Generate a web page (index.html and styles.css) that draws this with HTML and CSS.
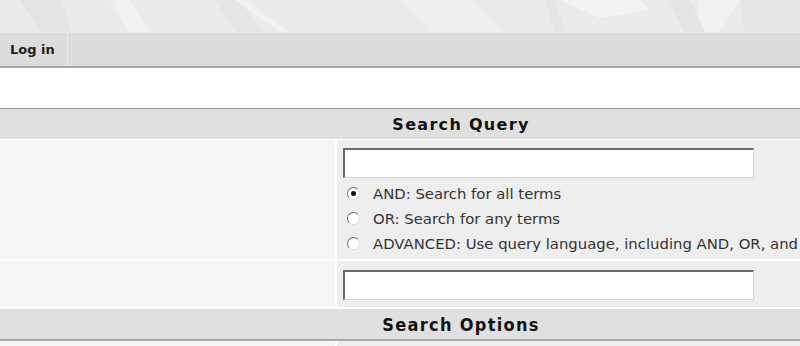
FILE: index.html
```html
<!DOCTYPE html>
<html>
<head>
<meta charset="utf-8">
<link rel="stylesheet" href="styles.css">
</head>
<body>
<header class="banner">
  <svg class="banner-art" width="800" height="32" viewBox="0 0 800 32" aria-hidden="true">
    <polygon points="20,0 60,0 72,32 40,32" fill="#e4e4e4"/>
    <polygon points="110,0 130,0 150,32 128,32" fill="#f1f1f1"/>
    <polygon points="215,0 240,0 262,32 236,32" fill="#e6e6e6"/>
    <polygon points="235,0 245,0 290,32 280,32" fill="#f2f2f2"/>
    <polygon points="560,0 640,0 650,10 600,18" fill="#f3f3f3"/>
    <polygon points="545,0 555,0 565,32 555,32" fill="#e5e5e5"/>
    <polygon points="700,0 740,0 720,32 690,32" fill="#f1f1f1"/>
    <polygon points="740,0 800,0 800,32 745,32" fill="#e6e6e6"/>
    <polygon points="400,0 470,0 505,32 430,32" fill="#eeeeee"/>
    <polygon points="670,0 690,0 705,32 684,32" fill="#e4e4e4"/>
  </svg>
</header>
<nav class="nav">
  <a class="nav-item" href="#">Log in</a>
</nav>
<div class="spacer"></div>
<div class="search">
  <div class="section-head">Search Query</div>
  <div class="cell-label"></div>
  <div class="cell-field">
    <input class="text-input" type="text">
    <div class="options">
      <label class="option"><input class="radio" type="radio" name="mode" checked><span>AND: Search for all terms</span></label>
      <label class="option"><input class="radio" type="radio" name="mode"><span>OR: Search for any terms</span></label>
      <label class="option"><input class="radio" type="radio" name="mode"><span>ADVANCED: Use query language, including AND, OR, and NOT</span></label>
    </div>
  </div>
  <div class="cell-label"></div>
  <div class="cell-field cell-short">
    <input class="text-input" type="text">
  </div>
  <div class="section-head section-head-alt">Search Options</div>
  <div class="cell-label cell-tail"></div>
  <div class="cell-field cell-tail"></div>
</div>
</body>
</html>
```
FILE: styles.css
```css
html, body {
  margin: 0;
  padding: 0;
  background: #ffffff;
  font-family: "DejaVu Sans", Verdana, sans-serif;
  overflow: hidden;
}
.banner {
  height: 32px;
  background: #ebebeb;
  overflow: hidden;
}
.banner-art {
  display: block;
}
.nav {
  display: flex;
  height: 33px;
  background: #dcdcdc;
  border-top: 1px solid #e6e6e6;
  border-bottom: 2px solid #a8a8a8;
  box-sizing: content-box;
}
.nav-item {
  display: flex;
  align-items: center;
  padding: 0 12px 0 10px;
  border-right: 1px solid #ececec;
  color: #1e1e1e;
  font-weight: bold;
  font-size: 13px;
  text-decoration: none;
}
.spacer {
  height: 40px;
}
.search {
  width: 922px;
  display: grid;
  grid-template-columns: 335px 1fr;
  column-gap: 2px;
  border-top: 1px solid #9a9a9a;
  background: #ffffff;
}
.section-head {
  grid-column: 1 / -1;
  height: 30px;
  background: #e0e0e0;
  border-bottom: 1px solid #ffffff;
  display: flex;
  align-items: center;
  justify-content: center;
  color: #111;
  font-weight: bold;
  font-size: 16px;
  letter-spacing: 1.3px;
}
.section-head-alt {
  margin-top: 1px;
  border-bottom: 2px solid #a8a8a8;
  font-family: "DejaVu Sans Condensed", "DejaVu Sans", sans-serif;
  font-size: 18px;
  letter-spacing: 1.3px;
  height: 30px;
}
.cell-label {
  background: #f5f5f5;
  margin-bottom: 2px;
}
.cell-field {
  background: #eeeeee;
  padding: 8px 0 3px 6px;
  margin-bottom: 2px;
  display: flex;
  flex-direction: column;
  align-items: flex-start;
}
.options {
  padding-top: 3px;
}
.cell-short {
  padding: 9px 0 7px 6px;
  margin-bottom: 1px;
}
.cell-tail {
  height: 10px;
  padding: 0;
}
.text-input {
  box-sizing: border-box;
  width: 411px;
  height: 30px;
  margin: 0;
  background: #ffffff;
  border-top: 2px solid #6a6a6a;
  border-left: 2px solid #6a6a6a;
  border-right: 1px solid #d4d4d4;
  border-bottom: 1px solid #d4d4d4;
  outline: none;
}
.option {
  display: flex;
  align-items: center;
  height: 25px;
  color: #333333;
  font-size: 14.85px;
  white-space: nowrap;
}
.option span {
  margin-left: 13px;
}
.radio {
  appearance: none;
  -webkit-appearance: none;
  box-sizing: border-box;
  width: 13px;
  height: 13px;
  margin: 0 0 0 4px;
  border-radius: 50%;
  border: 1px solid;
  border-color: #6c6c6c #dcdcdc #dcdcdc #6c6c6c;
  background: #ffffff;
  position: relative;
}
.radio:checked::after {
  content: "";
  position: absolute;
  left: 3px;
  top: 3px;
  width: 5px;
  height: 5px;
  border-radius: 50%;
  background: #111111;
}
```
